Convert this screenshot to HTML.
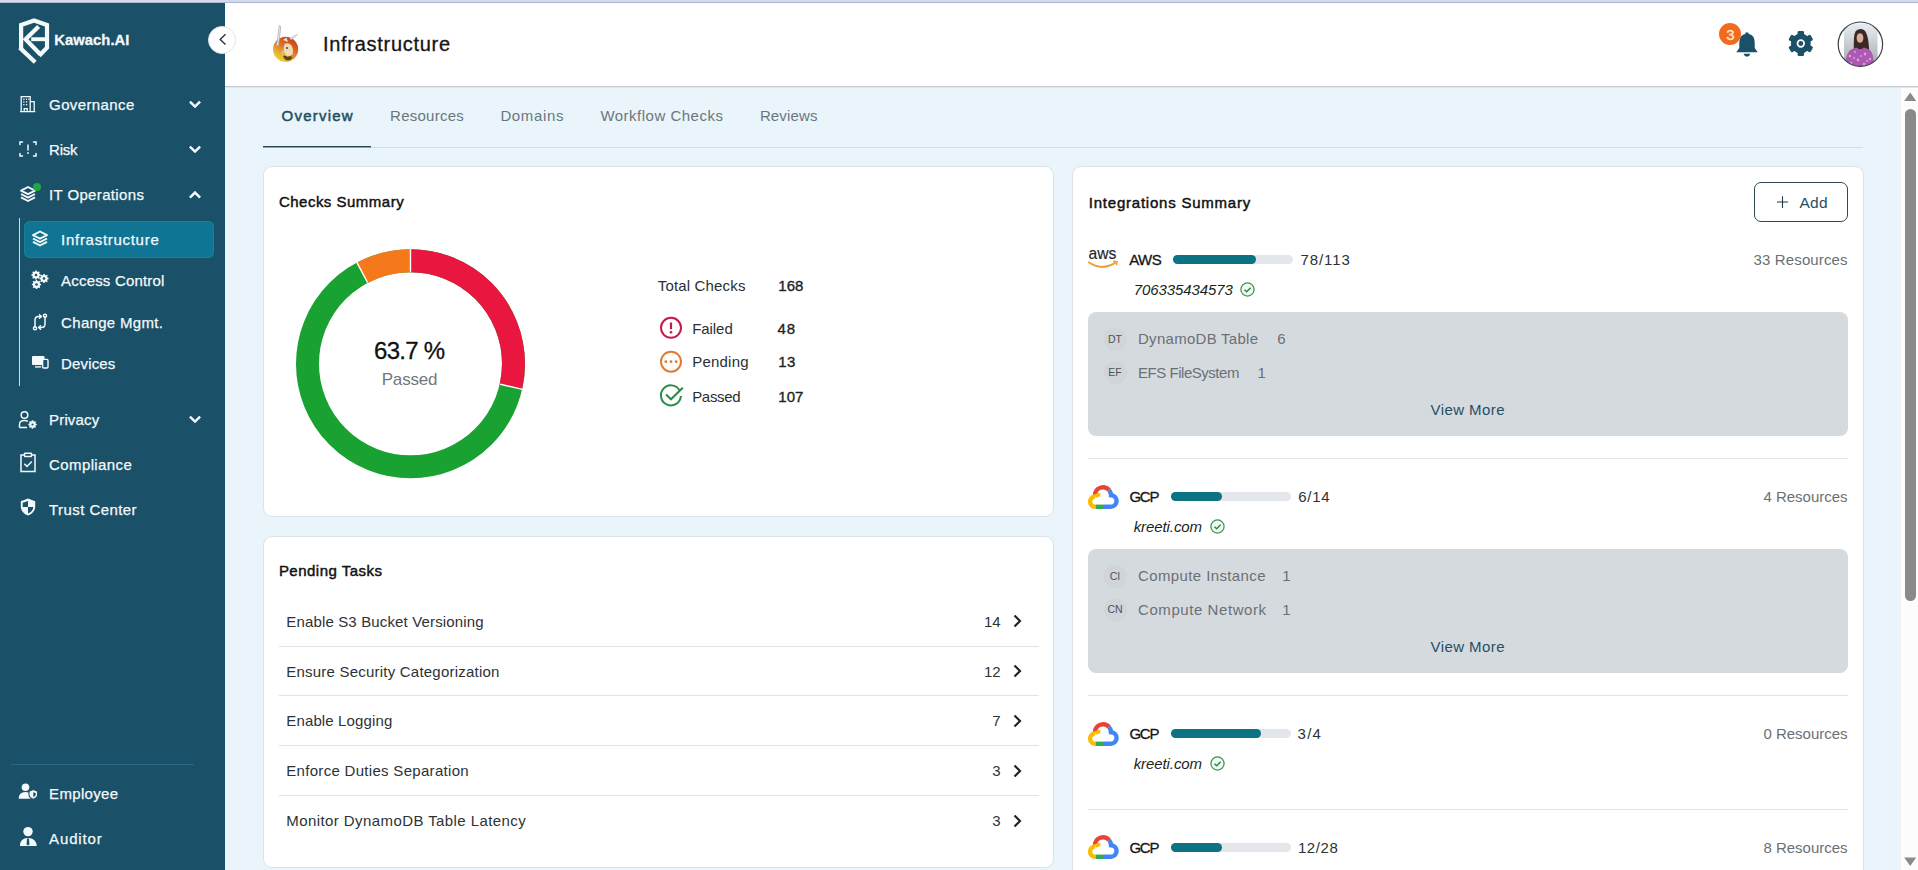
<!DOCTYPE html>
<html><head><meta charset="utf-8">
<style>
*{box-sizing:border-box;margin:0;padding:0}
html,body{width:1918px;height:870px;overflow:hidden}
body{position:relative;background:#e9f5fa;font-family:"Liberation Sans",sans-serif}
.a{position:absolute}
.t{position:absolute;white-space:nowrap;font-family:"Liberation Sans",sans-serif}
svg{position:absolute;overflow:visible}
.card{position:absolute;background:#fff;border:1px solid #dce3e8;border-radius:9px}
.sep{position:absolute;height:1px;background:#dfe3e6}
.bar{position:absolute;height:9px;border-radius:5px;background:#e3e6ea;width:120px}
.bar i{position:absolute;left:0;top:0;bottom:0;border-radius:5px;background:#0b7381}
.gbox{position:absolute;left:1088px;width:760px;height:124px;background:#d5dadf;border-radius:8px}
.chip{position:absolute;width:23px;height:23px;border-radius:50%;background:#d0d5da;color:#4d5257;font-size:10.5px;line-height:23px;text-align:center;font-family:"Liberation Sans",sans-serif}
</style></head><body>
<!-- top strip -->
<div class="a" style="left:0;top:0;width:1918px;height:2px;background:#d0dbf2"></div><div class="a" style="left:0;top:2px;width:1918px;height:1px;background:#afb6ca"></div>
<!-- sidebar -->
<div class="a" style="left:0;top:3px;width:225px;height:867px;background:#1a5068"></div>
<!-- header -->
<div class="a" style="left:225px;top:3px;width:1693px;height:84px;background:#fff;border-bottom:1px solid #c6cbce"></div>
<div class="a" style="left:225px;top:87px;width:1693px;height:1px;background:#dfe8ea"></div>

<!-- SIDEBAR CONTENT -->
<!-- logo shield -->
<svg style="left:0;top:0" width="60" height="70" viewBox="0 0 60 70">
 <g fill="none" stroke="#f4f9fb" stroke-width="4.2" stroke-linejoin="miter" stroke-linecap="butt">
  <path d="M21.1 48.8 L21.1 24.9 L34.1 20.4 L47 24.9 L47 47.6 L39.2 55.8"/>
  <path d="M19.7 47.6 L35.2 62.2"/>
  <path d="M38.6 26.4 L25.6 39.2 L40.2 54.2"/>
  <path d="M31.2 39.2 L47 39.2" stroke-width="3.9"/>
 </g>
</svg>
<!-- collapse btn -->
<div class="a" style="left:208px;top:26px;width:28px;height:28px;border-radius:50%;background:#fff;border:1px solid #e1e4e7"></div>
<svg style="left:208px;top:26px" width="28" height="28" viewBox="0 0 28 28"><path d="M17.5 8.3 L12.2 13.4 L17.5 18.5" fill="none" stroke="#2a3338" stroke-width="1.4"/></svg>

<!-- governance icon: building -->
<svg style="left:18px;top:94px" width="20" height="20" viewBox="0 0 20 20"><g fill="none" stroke="#f4f9fb" stroke-width="1.3">
 <path d="M3.2 17.6 V2.6 H12.2 V17.6 M12.2 7.6 H16.2 V17.6 M2 17.6 H17.4 M6.2 17.6 V14.6 H9.2 V17.6"/></g>
 <g fill="#f4f9fb"><rect x="5.2" y="4.6" width="1.3" height="1.3"/><rect x="7.9" y="4.6" width="1.3" height="1.3"/><rect x="5.2" y="7.3" width="1.3" height="1.3"/><rect x="7.9" y="7.3" width="1.3" height="1.3"/><rect x="5.2" y="10" width="1.3" height="1.3"/><rect x="7.9" y="10" width="1.3" height="1.3"/><rect x="10.2" y="4.6" width="1" height="1.3"/></g></svg>
<!-- risk icon -->
<svg style="left:18px;top:139px" width="20" height="20" viewBox="0 0 20 20"><g fill="none" stroke="#f4f9fb" stroke-width="1.5" stroke-linecap="round">
 <path d="M2 5.5 V3 H4.5 M15.5 3 H18 V5.5 M18 14.5 V17 H15.5 M4.5 17 H2 V14.5"/><path d="M10 6 V11"/></g><circle cx="10" cy="14" r="0.9" fill="#f4f9fb"/></svg>
<!-- layers icon (IT ops) -->
<svg style="left:18px;top:184px" width="20" height="20" viewBox="0 0 20 20"><g fill="none" stroke="#f4f9fb" stroke-width="1.9" stroke-linejoin="round">
 <path d="M10 3 L17 6.6 L10 10.2 L3 6.6 Z"/><path d="M3 10 L10 13.6 L17 10"/><path d="M3 13.4 L10 17 L17 13.4"/></g></svg>
<div class="a" style="left:33px;top:183px;width:8px;height:8px;border-radius:50%;background:#1fa83d"></div>
<!-- chevrons -->
<svg style="left:186px;top:95px" width="18" height="18" viewBox="0 0 18 18"><path d="M3.9 6.6 L9 11.6 L14.1 6.6" fill="none" stroke="#f4f9fb" stroke-width="2.5"/></svg>
<svg style="left:186px;top:140px" width="18" height="18" viewBox="0 0 18 18"><path d="M3.9 6.6 L9 11.6 L14.1 6.6" fill="none" stroke="#f4f9fb" stroke-width="2.5"/></svg>
<svg style="left:186px;top:185.5px" width="18" height="18" viewBox="0 0 18 18"><path d="M3.9 11.6 L9 6.6 L14.1 11.6" fill="none" stroke="#f4f9fb" stroke-width="2.5"/></svg>
<svg style="left:186px;top:410px" width="18" height="18" viewBox="0 0 18 18"><path d="M3.9 6.6 L9 11.6 L14.1 6.6" fill="none" stroke="#f4f9fb" stroke-width="2.5"/></svg>
<!-- submenu line -->
<div class="a" style="left:19px;top:218px;width:1px;height:168px;background:#c4e2ee"></div>
<!-- active pill -->
<div class="a" style="left:24px;top:221px;width:190px;height:37px;border-radius:6px;background:#107594;box-shadow:inset 0 0 0 1px #1a7d9a"></div>
<!-- infra layers icon -->
<svg style="left:30px;top:229px" width="20" height="20" viewBox="0 0 20 20"><g fill="none" stroke="#f4f9fb" stroke-width="1.9" stroke-linejoin="round">
 <path d="M10 2.5 L17 6.1 L10 9.7 L3 6.1 Z"/><path d="M3 9.5 L10 13.1 L17 9.5"/><path d="M3 12.9 L10 16.5 L17 12.9"/></g></svg>
<!-- access control gears -->
<svg style="left:30px;top:270px" width="20" height="20" viewBox="0 0 20 20"><g fill="#f4f9fb">
 <circle cx="6" cy="5" r="3.6"/><circle cx="14" cy="8.5" r="3.6"/><circle cx="6.5" cy="14.5" r="3.6"/></g>
 <g fill="#1a5068"><circle cx="6" cy="5" r="1.5"/><circle cx="14" cy="8.5" r="1.5"/><circle cx="6.5" cy="14.5" r="1.5"/></g>
 <g stroke="#f4f9fb" stroke-width="1.6"><path d="M6 0.4V9.6M1.4 5H10.6M2.7 1.7L9.3 8.3M9.3 1.7L2.7 8.3"/><path d="M14 3.9V13.1M9.4 8.5H18.6M10.7 5.2L17.3 11.8M17.3 5.2L10.7 11.8"/><path d="M6.5 9.9V19.1M1.9 14.5H11.1M3.2 11.2L9.8 17.8M9.8 11.2L3.2 17.8"/></g>
 <g fill="#f4f9fb"><circle cx="6" cy="5" r="2.8"/><circle cx="14" cy="8.5" r="2.8"/><circle cx="6.5" cy="14.5" r="2.8"/></g>
 <g fill="#1a5068"><circle cx="6" cy="5" r="1.3"/><circle cx="14" cy="8.5" r="1.3"/><circle cx="6.5" cy="14.5" r="1.3"/></g></svg>
<!-- change mgmt -->
<svg style="left:30px;top:312px" width="20" height="20" viewBox="0 0 20 20"><g fill="none" stroke="#f4f9fb" stroke-width="1.5" stroke-linecap="round">
 <path d="M5 15.5 V8 Q5 4.5 8.5 4.5 H11"/><path d="M9.5 2.8 L11.3 4.5 L9.5 6.2"/><path d="M15 4.5 V12 Q15 15.5 11.5 15.5 H9"/><path d="M10.5 13.8 L8.7 15.5 L10.5 17.2"/></g>
 <circle cx="5" cy="16.2" r="1.6" fill="none" stroke="#f4f9fb" stroke-width="1.4"/><circle cx="15" cy="3.8" r="1.6" fill="none" stroke="#f4f9fb" stroke-width="1.4"/></svg>
<!-- devices -->
<svg style="left:30px;top:353px" width="20" height="20" viewBox="0 0 20 20"><g fill="#f4f9fb">
 <rect x="2" y="3" width="12.5" height="9" rx="1"/><rect x="5" y="13.2" width="6" height="1.4"/></g>
 <rect x="12.6" y="6.4" width="5.4" height="8.6" rx="1" fill="#1a5068" stroke="#f4f9fb" stroke-width="1.4"/></svg>
<!-- privacy -->
<svg style="left:17px;top:410px" width="22" height="20" viewBox="0 0 22 20"><g fill="none" stroke="#f4f9fb" stroke-width="1.5">
 <circle cx="7.5" cy="5" r="3.3"/><path d="M2.5 17.5 V14.5 Q2.5 10.5 7.5 10.5 Q9.5 10.5 10.8 11.3 M2.5 17.5 H10"/></g>
 <g fill="#f4f9fb"><circle cx="15.5" cy="14.5" r="3.2"/></g>
 <g stroke="#f4f9fb" stroke-width="1.6"><path d="M15.5 10.3V18.7M11.3 14.5H19.7M12.5 11.5L18.5 17.5M18.5 11.5L12.5 17.5"/></g>
 <circle cx="15.5" cy="14.5" r="1.1" fill="#1a5068"/></svg>
<!-- compliance -->
<svg style="left:18px;top:452px" width="20" height="21" viewBox="0 0 20 21"><g fill="none" stroke="#f4f9fb" stroke-width="1.5">
 <path d="M6.5 3 H3 V19.5 H17 V3 H13.5"/><rect x="6.5" y="1.2" width="7" height="3.4" rx="0.6"/><path d="M6.3 11.8 L9 14.4 L13.8 9.4"/></g></svg>
<!-- trust shield -->
<svg style="left:18px;top:497px" width="20" height="20" viewBox="0 0 20 20"><path d="M10 1.6 L17.2 4.2 V9.5 Q17.2 15.6 10 18.6 Q2.8 15.6 2.8 9.5 V4.2 Z" fill="#f4f9fb"/>
 <path d="M10 4 V10 H15.3 Q15 14.4 10 16.6 V10 H4.7 V5.7 Z" fill="#1a5068"/></svg>
<!-- divider -->
<div class="a" style="left:11px;top:764px;width:183px;height:1px;background:#2a6a85"></div>
<!-- employee -->
<svg style="left:17px;top:783px" width="22" height="20" viewBox="0 0 22 20"><g fill="#f4f9fb">
 <circle cx="8.5" cy="4.3" r="3.8"/><path d="M1.7 15.8 Q1.7 9 8.5 9 Q12 9 13.8 10.6 L13.8 15.8 Z"/></g>
 <path d="M16.3 6.6 L20.6 8.3 V11.4 Q20.6 14.8 16.3 16.2 Q12 14.8 12 11.4 V8.3 Z" fill="#f4f9fb" stroke="#1a5068" stroke-width="1.1"/>
 <path d="M16.3 9.2 V14.3 Q18.7 13.2 18.7 11.3 V9.9 Z" fill="#1a5068"/></svg>
<!-- auditor -->
<svg style="left:17px;top:827px" width="22" height="22" viewBox="0 0 22 22"><g fill="#f4f9fb">
 <circle cx="11" cy="4.6" r="4.7"/><path d="M3 19 Q3 11 11 11 Q19 11 19.8 19 Z"/></g>
 <path d="M10.1 11.6 H11.9 L12.5 17.4 L11 18.6 L9.5 17.4 Z" fill="#1a5068"/></svg>

<!-- HEADER CONTENT -->
<!-- mascot -->
<svg style="left:266px;top:22px" width="40" height="46" viewBox="0 0 40 46">
 <defs><linearGradient id="mg" x1="0.8" y1="0.05" x2="0.25" y2="0.95"><stop offset="0" stop-color="#c43c1d"/><stop offset="0.45" stop-color="#e0712a"/><stop offset="0.8" stop-color="#e9b62e"/><stop offset="1" stop-color="#efd536"/></linearGradient></defs>
 <circle cx="19.6" cy="27.3" r="12.6" fill="url(#mg)"/>
 <path d="M13.4 3.4 Q15 3.8 14.6 6.2 L12.4 24 L10.6 23.4 Z" fill="#eef0f2" stroke="#9ea6ae" stroke-width="0.7"/>
 <path d="M31.5 12.4 L23.8 16.6 L25.2 17.8 Z" fill="#eceef0" stroke="#a4abb3" stroke-width="0.6"/>
 <path d="M17 18 L20.5 15.5 L22 20 Z" fill="#f4efe4" opacity="0.9"/>
 <path d="M18.5 22 Q22.5 20 25.5 23.5 Q28 28 26.5 32.5 Q23 35 19.5 33 Q16.5 28.5 18.5 22 Z" fill="#f1dfb8" opacity="0.95"/>
 <path d="M16.5 28 Q14.5 31 16 34 Q18 32 18.5 29 Z" fill="#d9c890" opacity="0.8"/>
 <path d="M17 34 Q20 33 21.5 35 Q24 33.5 26.5 35 Q25 38.5 21.5 38.5 Q18.5 38 17 34 Z" fill="#3a2a20" opacity="0.8"/>
 <circle cx="21" cy="26" r="0.9" fill="#333"/>
</svg>
<!-- bell -->
<svg style="left:1732.8px;top:29px" width="28" height="30" viewBox="0 0 26 28"><g fill="#1a5068">
 <path d="M13 3 Q14.6 3 14.8 4.6 Q20.2 6 20.2 12.5 V17.8 L23 21.6 H3 L5.8 17.8 V12.5 Q5.8 6 11.2 4.6 Q11.4 3 13 3 Z"/>
 <path d="M10 23.2 H16 Q15.6 25.8 13 25.8 Q10.4 25.8 10 23.2 Z"/></g></svg>
<!-- badge -->
<div class="a" style="left:1719.3px;top:22.9px;width:22px;height:22px;border-radius:50%;background:#f26a1b"></div>
<div class="t" style="left:1719.3px;top:25.5px;width:22px;text-align:center;font-size:15px;line-height:17px;color:#fde6d0;-webkit-text-stroke:0.4px #fde6d0">3</div>
<!-- gear -->
<svg style="left:1785px;top:28px" width="32" height="32" viewBox="0 0 32 32"><g transform="translate(15.8,15.5)" fill="#1a5068">
 <circle r="9.9"/><rect x="-3.2" y="-12.6" width="6.4" height="6" rx="1.3" transform="rotate(0)"/><rect x="-3.2" y="-12.6" width="6.4" height="6" rx="1.3" transform="rotate(60)"/><rect x="-3.2" y="-12.6" width="6.4" height="6" rx="1.3" transform="rotate(120)"/><rect x="-3.2" y="-12.6" width="6.4" height="6" rx="1.3" transform="rotate(180)"/><rect x="-3.2" y="-12.6" width="6.4" height="6" rx="1.3" transform="rotate(240)"/><rect x="-3.2" y="-12.6" width="6.4" height="6" rx="1.3" transform="rotate(300)"/></g>
 <circle cx="15.8" cy="15.5" r="3.3" fill="none" stroke="#fff" stroke-width="1.7"/></svg>
<!-- avatar -->
<svg style="left:1837px;top:21px" width="47" height="47" viewBox="0 0 47 47">
 <defs><clipPath id="av"><circle cx="23.4" cy="23.2" r="22"/></clipPath>
 <linearGradient id="avbg" x1="0" y1="0" x2="0" y2="1"><stop offset="0" stop-color="#e6edf2"/><stop offset="0.45" stop-color="#c9cdd1"/><stop offset="1" stop-color="#9fa3a8"/></linearGradient></defs>
 <g clip-path="url(#av)">
  <rect x="0" y="0" width="47" height="47" fill="#fdfdfd"/>
  <rect x="7" y="2.6" width="33.5" height="45" fill="url(#avbg)"/>
  <path d="M17 31 Q16 14 18.8 10 Q23 6.3 27.5 9.5 Q31.5 13 32.2 31 Z" fill="#3b2724"/>
  <ellipse cx="23" cy="17" rx="3.4" ry="4.8" fill="#dcae96"/>
  <path d="M8 47 Q8.5 30 15.5 28 L19.5 26.5 Q23 30 27 26.5 L31 28 Q37 30 37 47 Z" fill="#ad58b2"/>
  <g fill="#dca0da"><circle cx="13" cy="35" r="1.3"/><circle cx="18" cy="31" r="1.1"/><circle cx="28" cy="33" r="1.4"/><circle cx="33" cy="38" r="1.2"/><circle cx="21" cy="39" r="1.4"/><circle cx="14" cy="42" r="1.2"/><circle cx="27" cy="43" r="1.3"/><circle cx="24" cy="35" r="1"/><circle cx="30" cy="40" r="0.9"/><circle cx="17" cy="37" r="1"/></g>
 </g>
 </g>
 <circle cx="23.4" cy="23.2" r="22.2" fill="none" stroke="#3a4246" stroke-width="1.2"/>
</svg>

<!-- scrollbar -->
<div class="a" style="left:1900px;top:88px;width:18px;height:782px;background:#fcfcfc;border-left:1px solid #f0f2f3"></div>
<svg style="left:0;top:0" width="1918" height="870"><path d="M1904.2 101 L1910.2 92.4 L1916.2 101 Z" fill="#8a8a8a"/><path d="M1904.2 857.5 L1910.2 866 L1916.2 857.5 Z" fill="#8a8a8a"/></svg>
<div class="a" style="left:1905px;top:109px;width:11px;height:492px;border-radius:6px;background:#8a8a8a"></div>


<!-- TABS -->
<div class="a" style="left:263px;top:147px;width:1600px;height:1px;background:#d6dee4"></div>
<div class="a" style="left:263px;top:146px;width:108px;height:1px;background:#27464e"></div><div class="a" style="left:263px;top:147px;width:108px;height:1px;background:#8ea0a6"></div>

<!-- CARDS -->
<div class="card" style="left:263px;top:166px;width:791px;height:351px"></div>
<div class="card" style="left:263px;top:536px;width:791px;height:332px"></div>
<div class="card" style="left:1072px;top:166px;width:792px;height:760px"></div>

<!-- donut -->
<svg style="left:290px;top:244px" width="240" height="240" viewBox="0 0 240 240">
 <g transform="translate(120.5,119.8)" fill="none" stroke-width="23">
  <circle r="103" stroke="#19a132"/>
  <circle r="103" stroke="#e9163f" stroke-dasharray="184.97 1000" transform="rotate(-90)"/>
  <circle r="103" stroke="#f5791b" stroke-dasharray="50.14 1000" transform="rotate(241.9)"/>
  <g stroke="#fff" stroke-width="1.4">
   <line x1="0" y1="-92" x2="0" y2="-115"/>
   <line x1="0" y1="-92" x2="0" y2="-115" transform="rotate(102.86)"/>
   <line x1="0" y1="-92" x2="0" y2="-115" transform="rotate(332.14)"/>
  </g>
 </g>
</svg>
<!-- legend icons -->
<svg style="left:659px;top:316px" width="24" height="24" viewBox="0 0 24 24"><circle cx="12" cy="11.8" r="10" fill="none" stroke="#c8174b" stroke-width="2"/><path d="M12 6.5 V13.2" stroke="#c8174b" stroke-width="2.2"/><circle cx="12" cy="16.3" r="1.3" fill="#c8174b"/></svg>
<svg style="left:659px;top:350px" width="24" height="24" viewBox="0 0 24 24"><circle cx="12" cy="11.7" r="10" fill="none" stroke="#e07b33" stroke-width="2"/><circle cx="6.8" cy="11.7" r="1.4" fill="#e07b33"/><circle cx="12" cy="11.7" r="1.4" fill="#e07b33"/><circle cx="17.2" cy="11.7" r="1.4" fill="#e07b33"/></svg>
<svg style="left:659px;top:384px" width="26" height="24" viewBox="0 0 26 24"><path d="M20.5 6.2 A10 10 0 1 0 21.9 12" fill="none" stroke="#2e8a47" stroke-width="2"/><path d="M7 10.5 L12 15.2 L23.8 3.8" fill="none" stroke="#2e8a47" stroke-width="2.1"/></svg>

<!-- pending task separators -->
<div class="sep" style="left:279px;top:646px;width:760px"></div>
<div class="sep" style="left:279px;top:695px;width:760px"></div>
<div class="sep" style="left:279px;top:745px;width:760px"></div>
<div class="sep" style="left:279px;top:795px;width:760px"></div>
<!-- chevrons right -->
<svg style="left:1010px;top:612px" width="16" height="18" viewBox="0 0 16 18"><path d="M4.5 3.5 L10 9 L4.5 14.5" fill="none" stroke="#1f2326" stroke-width="2.2"/></svg>
<svg style="left:1010px;top:662px" width="16" height="18" viewBox="0 0 16 18"><path d="M4.5 3.5 L10 9 L4.5 14.5" fill="none" stroke="#1f2326" stroke-width="2.2"/></svg>
<svg style="left:1010px;top:711.5px" width="16" height="18" viewBox="0 0 16 18"><path d="M4.5 3.5 L10 9 L4.5 14.5" fill="none" stroke="#1f2326" stroke-width="2.2"/></svg>
<svg style="left:1010px;top:761.5px" width="16" height="18" viewBox="0 0 16 18"><path d="M4.5 3.5 L10 9 L4.5 14.5" fill="none" stroke="#1f2326" stroke-width="2.2"/></svg>
<svg style="left:1010px;top:811.5px" width="16" height="18" viewBox="0 0 16 18"><path d="M4.5 3.5 L10 9 L4.5 14.5" fill="none" stroke="#1f2326" stroke-width="2.2"/></svg>

<!-- INTEGRATIONS -->
<div class="a" style="left:1754px;top:182px;width:94px;height:40px;border:1.3px solid #2e4b53;border-radius:7px"></div>
<svg style="left:1775px;top:194px" width="15" height="15" viewBox="0 0 15 15"><path d="M7.5 2.2 V13.9 M1.9 8 H13.1" stroke="#233b42" stroke-width="1.1"/></svg>

<!-- AWS logo -->
<svg style="left:1086px;top:244px" width="36" height="28" viewBox="0 0 36 28">
 <text x="2.6" y="15" font-family="Liberation Sans" font-size="17" fill="#1c2530" textLength="27.8" lengthAdjust="spacingAndGlyphs" stroke="#1c2530" stroke-width="0.15">aws</text>
 <path d="M2.3 18.1 Q15.7 27.6 29.8 18.4" fill="none" stroke="#eb9f36" stroke-width="1.9"/>
 <path d="M27.2 17.3 L31 17.6 L30.4 21.4" fill="none" stroke="#eb9f36" stroke-width="1.4"/>
</svg>
<!-- GCP logos -->
<svg style="left:1088px;top:485px" width="30" height="24" viewBox="0 0 30 24">
 <g fill="none" stroke-width="4.4" stroke-linecap="butt">
  <path d="M7 10.2 A8 8 0 0 1 21.1 5.1" stroke="#ea4335"/>
  <path d="M21.1 5.1 A8 8 0 0 1 23 10.2 A5.8 5.8 0 0 1 22.6 21.8 H15" stroke="#4285f4"/>
  <path d="M15 21.8 H7.4" stroke="#34a853"/>
  <path d="M7.4 21.8 A5.2 5.2 0 0 1 7.2 11.4" stroke="#fbbc05"/>
  <path d="M7.2 11.4 A8 8 0 0 1 12.3 9.6" stroke="#fbbc05" stroke-width="3.6"/>
 </g>
</svg>
<svg style="left:1088px;top:721.8px" width="30" height="24" viewBox="0 0 30 24">
 <g fill="none" stroke-width="4.4" stroke-linecap="butt">
  <path d="M7 10.2 A8 8 0 0 1 21.1 5.1" stroke="#ea4335"/>
  <path d="M21.1 5.1 A8 8 0 0 1 23 10.2 A5.8 5.8 0 0 1 22.6 21.8 H15" stroke="#4285f4"/>
  <path d="M15 21.8 H7.4" stroke="#34a853"/>
  <path d="M7.4 21.8 A5.2 5.2 0 0 1 7.2 11.4" stroke="#fbbc05"/>
  <path d="M7.2 11.4 A8 8 0 0 1 12.3 9.6" stroke="#fbbc05" stroke-width="3.6"/>
 </g>
</svg>
<svg style="left:1088px;top:835px" width="30" height="24" viewBox="0 0 30 24">
 <g fill="none" stroke-width="4.4" stroke-linecap="butt">
  <path d="M7 10.2 A8 8 0 0 1 21.1 5.1" stroke="#ea4335"/>
  <path d="M21.1 5.1 A8 8 0 0 1 23 10.2 A5.8 5.8 0 0 1 22.6 21.8 H15" stroke="#4285f4"/>
  <path d="M15 21.8 H7.4" stroke="#34a853"/>
  <path d="M7.4 21.8 A5.2 5.2 0 0 1 7.2 11.4" stroke="#fbbc05"/>
  <path d="M7.2 11.4 A8 8 0 0 1 12.3 9.6" stroke="#fbbc05" stroke-width="3.6"/>
 </g>
</svg>
<!-- bars -->
<div class="bar" style="left:1173px;top:255px"><i style="width:83px"></i></div>
<div class="bar" style="left:1171px;top:492px"><i style="width:51px"></i></div>
<div class="bar" style="left:1171px;top:728.8px"><i style="width:90px"></i></div>
<div class="bar" style="left:1171px;top:842.8px"><i style="width:51px"></i></div>

<!-- check circles -->
<svg style="left:1239px;top:281px" width="17" height="17" viewBox="0 0 17 17"><circle cx="8.5" cy="8.5" r="6.6" fill="#f0f9f2" stroke="#3a9350" stroke-width="1.25"/><path d="M5.5 8.7 L7.7 10.8 L11.6 6.7" fill="none" stroke="#2e8746" stroke-width="1.5"/></svg>
<svg style="left:1209px;top:518px" width="17" height="17" viewBox="0 0 17 17"><circle cx="8.5" cy="8.5" r="6.6" fill="#f0f9f2" stroke="#3a9350" stroke-width="1.25"/><path d="M5.5 8.7 L7.7 10.8 L11.6 6.7" fill="none" stroke="#2e8746" stroke-width="1.5"/></svg>
<svg style="left:1209px;top:754.8px" width="17" height="17" viewBox="0 0 17 17"><circle cx="8.5" cy="8.5" r="6.6" fill="#f0f9f2" stroke="#3a9350" stroke-width="1.25"/><path d="M5.5 8.7 L7.7 10.8 L11.6 6.7" fill="none" stroke="#2e8746" stroke-width="1.5"/></svg>

<!-- gray boxes -->
<div class="gbox" style="top:312px"></div>
<div class="gbox" style="top:549px"></div>
<div class="chip" style="left:1103.5px;top:327.5px">DT</div>
<div class="chip" style="left:1103.5px;top:360.5px">EF</div>
<div class="chip" style="left:1103.5px;top:564.5px">CI</div>
<div class="chip" style="left:1103.5px;top:598px">CN</div>

<!-- dividers -->
<div class="sep" style="left:1088px;top:457.5px;width:760px"></div>
<div class="sep" style="left:1088px;top:694.5px;width:760px"></div>
<div class="sep" style="left:1088px;top:808.5px;width:760px"></div>

<span class='t' style="left:54.21px;top:33.36px;font-size:14.7px;line-height:14.7px;font-weight:700;font-style:normal;color:#f4f9fb;letter-spacing:0.118px;-webkit-text-stroke:0.3px #f4f9fb;">Kawach.AI</span>
<span class='t' style="left:49.10px;top:97.30px;font-size:15px;line-height:15px;font-weight:400;font-style:normal;color:#f4f9fb;letter-spacing:0.381px;-webkit-text-stroke:0.25px #f4f9fb;">Governance</span>
<span class='t' style="left:49.10px;top:142.00px;font-size:15px;line-height:15px;font-weight:400;font-style:normal;color:#f4f9fb;letter-spacing:-0.241px;-webkit-text-stroke:0.25px #f4f9fb;">Risk</span>
<span class='t' style="left:49.10px;top:187.30px;font-size:15px;line-height:15px;font-weight:400;font-style:normal;color:#f4f9fb;letter-spacing:0.353px;-webkit-text-stroke:0.25px #f4f9fb;">IT Operations</span>
<span class='t' style="left:61.10px;top:231.90px;font-size:15px;line-height:15px;font-weight:400;font-style:normal;color:#f4f9fb;letter-spacing:0.713px;-webkit-text-stroke:0.25px #f4f9fb;">Infrastructure</span>
<span class='t' style="left:61.10px;top:272.80px;font-size:15px;line-height:15px;font-weight:400;font-style:normal;color:#f4f9fb;letter-spacing:0.183px;-webkit-text-stroke:0.25px #f4f9fb;">Access Control</span>
<span class='t' style="left:61.10px;top:315.30px;font-size:15px;line-height:15px;font-weight:400;font-style:normal;color:#f4f9fb;letter-spacing:0.314px;-webkit-text-stroke:0.25px #f4f9fb;">Change Mgmt.</span>
<span class='t' style="left:61.10px;top:355.90px;font-size:15px;line-height:15px;font-weight:400;font-style:normal;color:#f4f9fb;letter-spacing:0.148px;-webkit-text-stroke:0.25px #f4f9fb;">Devices</span>
<span class='t' style="left:49.10px;top:412.30px;font-size:15px;line-height:15px;font-weight:400;font-style:normal;color:#f4f9fb;letter-spacing:0.144px;-webkit-text-stroke:0.25px #f4f9fb;">Privacy</span>
<span class='t' style="left:49.10px;top:457.30px;font-size:15px;line-height:15px;font-weight:400;font-style:normal;color:#f4f9fb;letter-spacing:0.381px;-webkit-text-stroke:0.25px #f4f9fb;">Compliance</span>
<span class='t' style="left:49.10px;top:502.30px;font-size:15px;line-height:15px;font-weight:400;font-style:normal;color:#f4f9fb;letter-spacing:0.422px;-webkit-text-stroke:0.25px #f4f9fb;">Trust Center</span>
<span class='t' style="left:49.10px;top:786.30px;font-size:15px;line-height:15px;font-weight:400;font-style:normal;color:#f4f9fb;letter-spacing:0.335px;-webkit-text-stroke:0.25px #f4f9fb;">Employee</span>
<span class='t' style="left:49.10px;top:831.30px;font-size:15px;line-height:15px;font-weight:400;font-style:normal;color:#f4f9fb;letter-spacing:0.853px;-webkit-text-stroke:0.25px #f4f9fb;">Auditor</span>
<span class='t' style="left:322.90px;top:33.87px;font-size:20px;line-height:20px;font-weight:400;font-style:normal;color:#151515;letter-spacing:0.721px;-webkit-text-stroke:0.3px #151515;">Infrastructure</span>
<span class='t' style="left:281.50px;top:108.30px;font-size:15px;line-height:15px;font-weight:400;font-style:normal;color:#1f4f61;letter-spacing:1.233px;-webkit-text-stroke:0.5px #1f4f61;">Overview</span>
<span class='t' style="left:390.10px;top:108.30px;font-size:15px;line-height:15px;font-weight:400;font-style:normal;color:#6b7780;letter-spacing:0.243px;">Resources</span>
<span class='t' style="left:500.40px;top:108.30px;font-size:15px;line-height:15px;font-weight:400;font-style:normal;color:#6b7780;letter-spacing:0.644px;">Domains</span>
<span class='t' style="left:600.40px;top:108.30px;font-size:15px;line-height:15px;font-weight:400;font-style:normal;color:#6b7780;letter-spacing:0.497px;">Workflow Checks</span>
<span class='t' style="left:759.90px;top:108.30px;font-size:15px;line-height:15px;font-weight:400;font-style:normal;color:#6b7780;letter-spacing:0.144px;">Reviews</span>
<span class='t' style="left:278.90px;top:194.30px;font-size:15px;line-height:15px;font-weight:400;font-style:normal;color:#111;letter-spacing:0.492px;-webkit-text-stroke:0.45px #111;">Checks Summary</span>
<span class='t' style="left:374.04px;top:339.18px;font-size:24px;line-height:24px;font-weight:400;font-style:normal;color:#111;letter-spacing:-0.708px;-webkit-text-stroke:0.3px #111;">63.7 %</span>
<span class='t' style="left:381.72px;top:370.61px;font-size:17px;line-height:17px;font-weight:400;font-style:normal;color:#72787e;letter-spacing:-0.183px;">Passed</span>
<span class='t' style="left:657.80px;top:277.80px;font-size:15px;line-height:15px;font-weight:400;font-style:normal;color:#2b2f33;letter-spacing:0.161px;">Total Checks</span>
<span class='t' style="left:778.20px;top:277.80px;font-size:15px;line-height:15px;font-weight:400;font-style:normal;color:#1c1f22;letter-spacing:0.109px;-webkit-text-stroke:0.35px #1c1f22;">168</span>
<span class='t' style="left:692.20px;top:321.00px;font-size:15px;line-height:15px;font-weight:400;font-style:normal;color:#2b2f33;letter-spacing:-0.062px;">Failed</span>
<span class='t' style="left:777.40px;top:321.00px;font-size:15px;line-height:15px;font-weight:400;font-style:normal;color:#1c1f22;letter-spacing:1.062px;-webkit-text-stroke:0.35px #1c1f22;">48</span>
<span class='t' style="left:692.20px;top:354.10px;font-size:15px;line-height:15px;font-weight:400;font-style:normal;color:#2b2f33;letter-spacing:0.215px;">Pending</span>
<span class='t' style="left:778.20px;top:354.10px;font-size:15px;line-height:15px;font-weight:400;font-style:normal;color:#1c1f22;letter-spacing:0.562px;-webkit-text-stroke:0.35px #1c1f22;">13</span>
<span class='t' style="left:692.20px;top:389.00px;font-size:15px;line-height:15px;font-weight:400;font-style:normal;color:#2b2f33;letter-spacing:-0.319px;">Passed</span>
<span class='t' style="left:778.20px;top:389.00px;font-size:15px;line-height:15px;font-weight:400;font-style:normal;color:#1c1f22;letter-spacing:0.109px;-webkit-text-stroke:0.35px #1c1f22;">107</span>
<span class='t' style="left:278.90px;top:563.30px;font-size:15px;line-height:15px;font-weight:400;font-style:normal;color:#111;letter-spacing:0.479px;-webkit-text-stroke:0.45px #111;">Pending Tasks</span>
<span class='t' style="left:286.30px;top:613.80px;font-size:15px;line-height:15px;font-weight:400;font-style:normal;color:#2e3236;letter-spacing:0.149px;">Enable S3 Bucket Versioning</span>
<span class='t' style="left:983.91px;top:613.80px;font-size:15px;line-height:15px;font-weight:400;font-style:normal;color:#2e3236;letter-spacing:0.000px;">14</span>
<span class='t' style="left:286.30px;top:663.80px;font-size:15px;line-height:15px;font-weight:400;font-style:normal;color:#2e3236;letter-spacing:0.216px;">Ensure Security Categorization</span>
<span class='t' style="left:983.91px;top:663.80px;font-size:15px;line-height:15px;font-weight:400;font-style:normal;color:#2e3236;letter-spacing:0.000px;">12</span>
<span class='t' style="left:286.30px;top:713.10px;font-size:15px;line-height:15px;font-weight:400;font-style:normal;color:#2e3236;letter-spacing:0.130px;">Enable Logging</span>
<span class='t' style="left:992.26px;top:713.10px;font-size:15px;line-height:15px;font-weight:400;font-style:normal;color:#2e3236;letter-spacing:0.000px;">7</span>
<span class='t' style="left:286.30px;top:763.10px;font-size:15px;line-height:15px;font-weight:400;font-style:normal;color:#2e3236;letter-spacing:0.302px;">Enforce Duties Separation</span>
<span class='t' style="left:992.26px;top:763.10px;font-size:15px;line-height:15px;font-weight:400;font-style:normal;color:#2e3236;letter-spacing:0.000px;">3</span>
<span class='t' style="left:286.30px;top:813.10px;font-size:15px;line-height:15px;font-weight:400;font-style:normal;color:#2e3236;letter-spacing:0.417px;">Monitor DynamoDB Table Latency</span>
<span class='t' style="left:992.26px;top:813.10px;font-size:15px;line-height:15px;font-weight:400;font-style:normal;color:#2e3236;letter-spacing:0.000px;">3</span>
<span class='t' style="left:1088.80px;top:195.30px;font-size:15px;line-height:15px;font-weight:400;font-style:normal;color:#111;letter-spacing:0.775px;-webkit-text-stroke:0.45px #111;">Integrations Summary</span>
<span class='t' style="left:1799.38px;top:194.88px;font-size:15.5px;line-height:15.5px;font-weight:400;font-style:normal;color:#1f4f61;letter-spacing:0.346px;">Add</span>
<span class='t' style="left:1129.20px;top:252.30px;font-size:15px;line-height:15px;font-weight:400;font-style:normal;color:#151515;letter-spacing:-0.538px;-webkit-text-stroke:0.3px #151515;">AWS</span>
<span class='t' style="left:1300.40px;top:252.30px;font-size:15px;line-height:15px;font-weight:400;font-style:normal;color:#2e3236;letter-spacing:0.957px;">78/113</span>
<span class='t' style="left:1753.55px;top:252.30px;font-size:15px;line-height:15px;font-weight:400;font-style:normal;color:#6b7075;letter-spacing:0.135px;">33 Resources</span>
<span class='t' style="left:1133.70px;top:281.80px;font-size:15px;line-height:15px;font-weight:400;font-style:italic;color:#1c1f22;letter-spacing:-0.096px;">706335434573</span>
<span class='t' style="left:1129.40px;top:489.30px;font-size:15px;line-height:15px;font-weight:400;font-style:normal;color:#151515;letter-spacing:-1.233px;-webkit-text-stroke:0.3px #151515;">GCP</span>
<span class='t' style="left:1298.20px;top:489.30px;font-size:15px;line-height:15px;font-weight:400;font-style:normal;color:#2e3236;letter-spacing:0.749px;">6/14</span>
<span class='t' style="left:1763.38px;top:489.30px;font-size:15px;line-height:15px;font-weight:400;font-style:normal;color:#6b7075;letter-spacing:0.000px;">4 Resources</span>
<span class='t' style="left:1133.70px;top:518.80px;font-size:15px;line-height:15px;font-weight:400;font-style:italic;color:#1c1f22;letter-spacing:-0.093px;">kreeti.com</span>
<span class='t' style="left:1129.40px;top:726.10px;font-size:15px;line-height:15px;font-weight:400;font-style:normal;color:#151515;letter-spacing:-1.233px;-webkit-text-stroke:0.3px #151515;">GCP</span>
<span class='t' style="left:1297.60px;top:726.10px;font-size:15px;line-height:15px;font-weight:400;font-style:normal;color:#2e3236;letter-spacing:1.245px;">3/4</span>
<span class='t' style="left:1763.38px;top:726.10px;font-size:15px;line-height:15px;font-weight:400;font-style:normal;color:#6b7075;letter-spacing:0.000px;">0 Resources</span>
<span class='t' style="left:1133.70px;top:755.60px;font-size:15px;line-height:15px;font-weight:400;font-style:italic;color:#1c1f22;letter-spacing:-0.093px;">kreeti.com</span>
<span class='t' style="left:1129.40px;top:840.10px;font-size:15px;line-height:15px;font-weight:400;font-style:normal;color:#151515;letter-spacing:-1.233px;-webkit-text-stroke:0.3px #151515;">GCP</span>
<span class='t' style="left:1297.90px;top:840.10px;font-size:15px;line-height:15px;font-weight:400;font-style:normal;color:#2e3236;letter-spacing:0.626px;">12/28</span>
<span class='t' style="left:1763.38px;top:840.10px;font-size:15px;line-height:15px;font-weight:400;font-style:normal;color:#6b7075;letter-spacing:0.000px;">8 Resources</span>
<span class='t' style="left:1133.70px;top:869.60px;font-size:15px;line-height:15px;font-weight:400;font-style:italic;color:#1c1f22;letter-spacing:-0.093px;">kreeti.com</span>
<span class='t' style="left:1138.00px;top:330.70px;font-size:15px;line-height:15px;font-weight:400;font-style:normal;color:#6b7075;letter-spacing:0.277px;">DynamoDB Table</span>
<span class='t' style="left:1277.20px;top:330.70px;font-size:15px;line-height:15px;font-weight:400;font-style:normal;color:#6b7075;letter-spacing:0.000px;">6</span>
<span class='t' style="left:1138.00px;top:364.70px;font-size:15px;line-height:15px;font-weight:400;font-style:normal;color:#6b7075;letter-spacing:-0.468px;">EFS FileSystem</span>
<span class='t' style="left:1257.40px;top:364.70px;font-size:15px;line-height:15px;font-weight:400;font-style:normal;color:#6b7075;letter-spacing:0.000px;">1</span>
<span class='t' style="left:1430.50px;top:401.50px;font-size:15px;line-height:15px;font-weight:400;font-style:normal;color:#1f5063;letter-spacing:0.432px;">View More</span>
<span class='t' style="left:1138.00px;top:567.70px;font-size:15px;line-height:15px;font-weight:400;font-style:normal;color:#6b7075;letter-spacing:0.387px;">Compute Instance</span>
<span class='t' style="left:1282.20px;top:567.70px;font-size:15px;line-height:15px;font-weight:400;font-style:normal;color:#6b7075;letter-spacing:0.000px;">1</span>
<span class='t' style="left:1138.00px;top:601.90px;font-size:15px;line-height:15px;font-weight:400;font-style:normal;color:#6b7075;letter-spacing:0.572px;">Compute Network</span>
<span class='t' style="left:1282.20px;top:601.90px;font-size:15px;line-height:15px;font-weight:400;font-style:normal;color:#6b7075;letter-spacing:0.000px;">1</span>
<span class='t' style="left:1430.50px;top:638.70px;font-size:15px;line-height:15px;font-weight:400;font-style:normal;color:#1f5063;letter-spacing:0.432px;">View More</span>
</body></html>
